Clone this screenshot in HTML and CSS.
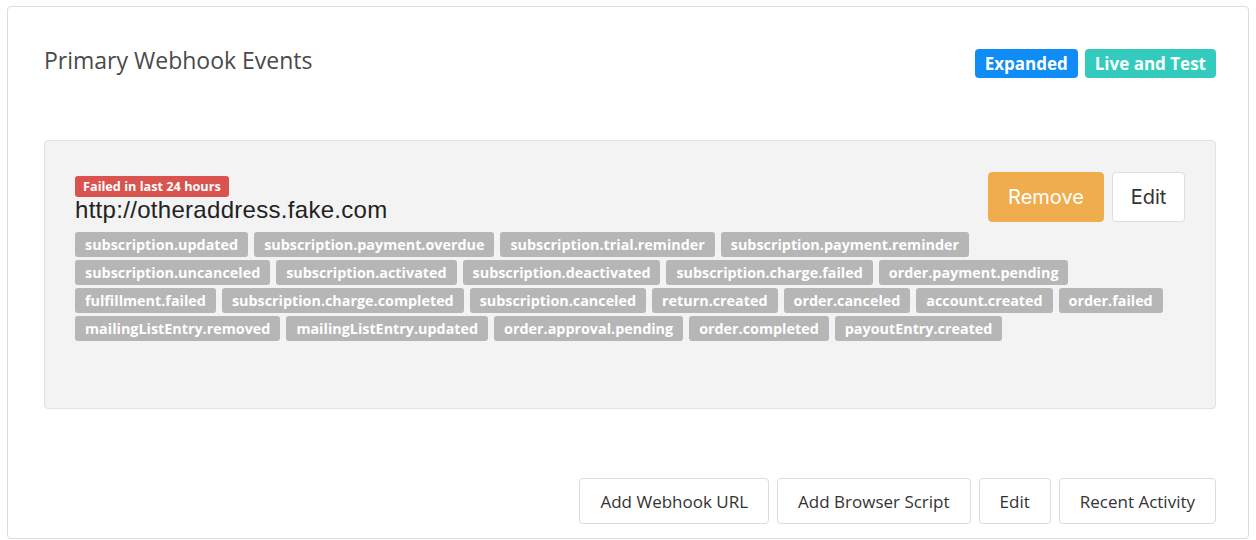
FILE: index.html
```html
<!DOCTYPE html>
<html>
<head>
<meta charset="utf-8">
<link rel="stylesheet" href="styles.css">
</head>
<body>
<div class="card">
  <div class="header">
    <h2 class="title">Primary Webhook Events</h2>
    <div class="badges">
      <span class="badge badge-blue">Expanded</span>
      <span class="badge badge-teal">Live and Test</span>
    </div>
  </div>
  <div class="panel">
    <div class="panel-top">
      <div class="panel-main">
        <span class="fail-label">Failed in last 24 hours</span>
        <div class="url">http://otheraddress.fake.com</div>
      </div>
      <div class="panel-actions">
        <button class="btn-remove">Remove</button>
        <button class="btn-edit">Edit</button>
      </div>
    </div>
    <div class="tags">
      <div class="tag-row">
        <span class="tag">subscription.updated</span>
        <span class="tag">subscription.payment.overdue</span>
        <span class="tag">subscription.trial.reminder</span>
        <span class="tag">subscription.payment.reminder</span>
      </div>
      <div class="tag-row">
        <span class="tag">subscription.uncanceled</span>
        <span class="tag">subscription.activated</span>
        <span class="tag">subscription.deactivated</span>
        <span class="tag">subscription.charge.failed</span>
        <span class="tag">order.payment.pending</span>
      </div>
      <div class="tag-row">
        <span class="tag">fulfillment.failed</span>
        <span class="tag">subscription.charge.completed</span>
        <span class="tag">subscription.canceled</span>
        <span class="tag">return.created</span>
        <span class="tag">order.canceled</span>
        <span class="tag">account.created</span>
        <span class="tag">order.failed</span>
      </div>
      <div class="tag-row">
        <span class="tag">mailingListEntry.removed</span>
        <span class="tag">mailingListEntry.updated</span>
        <span class="tag">order.approval.pending</span>
        <span class="tag">order.completed</span>
        <span class="tag">payoutEntry.created</span>
      </div>
    </div>
  </div>
  <div class="footer">
    <button class="btn">Add Webhook URL</button>
    <button class="btn">Add Browser Script</button>
    <button class="btn">Edit</button>
    <button class="btn">Recent Activity</button>
  </div>
</div>
</body>
</html>
```

FILE: styles.css
```css
* { box-sizing: border-box; }
html, body { margin: 0; padding: 0; background: #fff; }
body {
  padding: 6px 8px 0 7px;
  font-family: "Open Sans", Lato, sans-serif;
  color: #333;
}
.card {
  width: 1242px;
  height: 533px;
  border: 1px solid #dcdcdc;
  border-radius: 4px;
  padding: 38px 32px 14px 36px;
  display: flex;
  flex-direction: column;
}
.header {
  display: flex;
  justify-content: space-between;
  align-items: flex-start;
  height: 36px;
}
.title {
  margin: 0;
  font-size: 23px;
  font-weight: 400;
  color: #4a4a4a;
  line-height: 31px;
}
.badges { display: flex; gap: 7px; margin-top: 4px; }
.badge {
  height: 29px;
  line-height: 29px;
  padding: 0 10px;
  border-radius: 4px;
  color: #fff;
  font-weight: 700;
  font-size: 17px;
}
.badge-blue { background: #0f8cf5; }
.badge-teal { background: #33cbbd; }
.panel {
  margin-top: 59px;
  background: #f3f3f3;
  border: 1px solid #e2e2e2;
  border-radius: 4px;
  height: 269px;
  padding: 31px 30px 0 30px;
}
.panel-top {
  display: flex;
  justify-content: space-between;
  align-items: flex-start;
}
.panel-main { padding-top: 4px; }
.fail-label {
  display: inline-block;
  vertical-align: top;
  background: #d9534f;
  color: #fff;
  font-size: 12.7px;
  font-weight: 700;
  height: 21px;
  line-height: 21px;
  padding: 0 8px;
  border-radius: 3px;
}
.url {
  font-family: "Liberation Sans", Arial, sans-serif;
  font-size: 24px;
  letter-spacing: 0.3px;
  color: #222;
  line-height: 24px;
}
.tags {
  display: flex;
  flex-direction: column;
  gap: 3px;
  margin-top: 10px;
}
.tag-row {
  display: flex;
  gap: 6px;
}
.tag {
  background: #b6b6b6;
  color: #fff;
  font-weight: 700;
  font-size: 14.35px;
  height: 25px;
  line-height: 25px;
  padding: 0 10px;
  border-radius: 3px;
  white-space: nowrap;
}
.panel-actions { display: flex; gap: 8px; }
.btn-remove, .btn-edit {
  font-family: Inter, "Open Sans", sans-serif;
  font-size: 20px;
  height: 50px;
  border-radius: 4px;
  cursor: pointer;
}
.btn-remove {
  background: #f0ad4e;
  color: #fff;
  border: 1px solid #f0ad4e;
  width: 116px;
}
.btn-edit {
  background: #fff;
  color: #333;
  border: 1px solid #dedede;
  width: 73px;
}
.footer {
  margin-top: auto;
  display: flex;
  justify-content: flex-end;
  gap: 8px;
}
.btn {
  font-family: "Open Sans", Lato, sans-serif;
  font-size: 17px;
  color: #333;
  background: #fff;
  border: 1px solid #dcdcdc;
  border-radius: 4px;
  height: 46px;
  padding: 0 20px;
}
```
